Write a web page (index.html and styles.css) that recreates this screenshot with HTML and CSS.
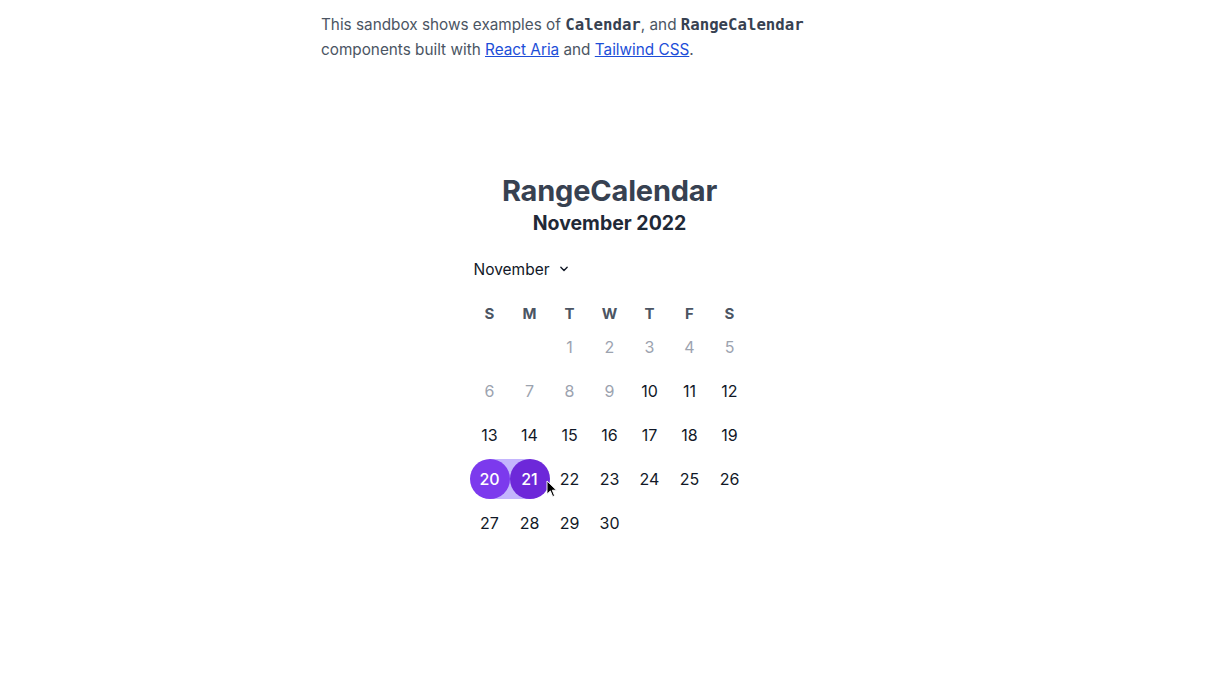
FILE: index.html
```html
<!DOCTYPE html>
<html>
<head>
<meta charset="utf-8">
<link rel="stylesheet" href="styles.css">
</head>
<body>
<main class="page">
  <p class="intro">This sandbox shows examples of <code>Calendar</code>, and <code>RangeCalendar</code> components built with <a href="#">React Aria</a> and <a href="#">Tailwind CSS</a>.</p>
  <section class="demo">
    <h2 class="title">RangeCalendar</h2>
    <h3 class="subtitle">November 2022</h3>
    <div class="calendar">
      <div class="month-picker">November <svg class="chev" viewBox="0 0 20 20" width="14" height="14"><path d="M5.5 7.5 L10 12 L14.5 7.5" fill="none" stroke="#111827" stroke-width="2" stroke-linecap="round" stroke-linejoin="round"/></svg></div>
      <div class="grid">
        <div class="dow">S</div><div class="dow">M</div><div class="dow">T</div><div class="dow">W</div><div class="dow">T</div><div class="dow">F</div><div class="dow">S</div>
        <div class="cell"></div><div class="cell"></div><div class="cell muted">1</div><div class="cell muted">2</div><div class="cell muted">3</div><div class="cell muted">4</div><div class="cell muted">5</div>
        <div class="cell muted">6</div><div class="cell muted">7</div><div class="cell muted">8</div><div class="cell muted">9</div><div class="cell">10</div><div class="cell">11</div><div class="cell">12</div>
        <div class="cell">13</div><div class="cell">14</div><div class="cell">15</div><div class="cell">16</div><div class="cell">17</div><div class="cell">18</div><div class="cell">19</div>
        <div class="cell range start"><span class="dot">20</span></div><div class="cell range end"><span class="dot hover">21</span></div><div class="cell">22</div><div class="cell">23</div><div class="cell">24</div><div class="cell">25</div><div class="cell">26</div>
        <div class="cell">27</div><div class="cell">28</div><div class="cell">29</div><div class="cell">30</div><div class="cell"></div><div class="cell"></div><div class="cell"></div>
      </div>
      <svg class="cursor" viewBox="0 0 12 19" width="11.5" height="18"><path d="M1 1 L1 15 L4.5 11.5 L7 17.5 L9 16.6 L6.6 10.8 L11 10.8 Z" fill="#000" stroke="#fff" stroke-width="1"/></svg>
    </div>
  </section>
</main>
</body>
</html>
```
FILE: styles.css
```css
html, body { margin: 0; padding: 0; background: #fff; }
body { font-family: Inter, "Noto Sans", sans-serif; color: #111827; }
.page { max-width: 588px; margin: 0 auto; padding-top: 12px; }
.intro { margin: 0; max-width: 500px; font-size: 15.3px; line-height: 25px; color: #4b5563; }
.intro code { font-family: "DejaVu Sans Mono", "Liberation Mono", monospace; font-weight: 700; font-size: 15.7px; color: #374151; }
.intro a { color: #1d4ed8; text-decoration: underline; }
.demo { display: flex; flex-direction: column; align-items: center; margin-top: 111px; margin-left: -11px; }
.title { margin: 0; font-size: 29px; line-height: 36px; font-weight: 700; color: #374151; letter-spacing: -0.2px; }
.subtitle { margin: 0; font-size: 19.5px; line-height: 28px; font-weight: 700; color: #1f2937; }
.calendar { position: relative; margin-top: 18px; width: 280px; }
.month-picker { display: flex; align-items: center; gap: 7px; height: 28px; padding-left: 4px; font-size: 15.5px; color: #111827; }
.chev { display: block; }
.grid { display: grid; grid-template-columns: repeat(7, 40px); row-gap: 4px; margin-top: 20px; }
.dow { height: 20px; display: flex; align-items: center; justify-content: center; font-size: 15px; font-weight: 700; color: #4b5563; }
.cell { height: 40px; display: flex; align-items: center; justify-content: center; font-size: 16px; color: #111827; }
.cell.muted { color: #9ca3af; }
.cell.range { position: relative; }
.cell.range.start { background: linear-gradient(to right, transparent 50%, #c4b5fd 50%); }
.cell.range.end { background: linear-gradient(to right, #c4b5fd 50%, transparent 50%); }
.dot { position: relative; width: 40px; height: 40px; border-radius: 50%; background: #7c3aed; color: #fff; display: flex; align-items: center; justify-content: center; font-weight: 500; }
.dot.hover { background: #6d28d9; }
.cursor { position: absolute; left: 76px; top: 225px; }
```
